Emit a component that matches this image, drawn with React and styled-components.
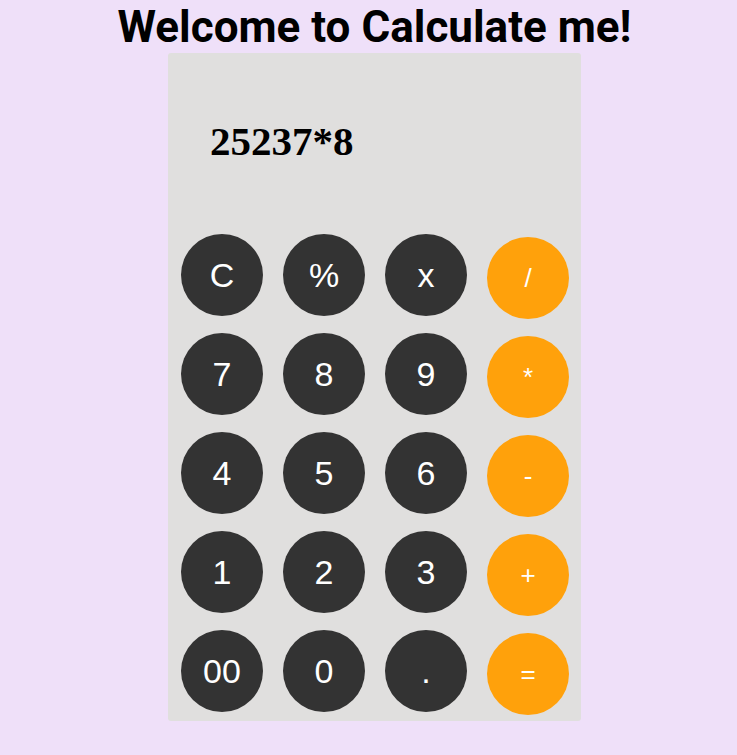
import React from "react";
import styled, { createGlobalStyle } from "styled-components";

const GlobalStyle = createGlobalStyle`
  body {
    margin: 0;
    background-color: #efe0f9;
    font-family: "Liberation Sans", Arial, sans-serif;
  }
`;

const Page = styled.div`
  display: flex;
  flex-direction: column;
  align-items: center;
  padding-left: 12px;
  min-height: 755px;
  box-sizing: border-box;
`;

const Title = styled.h1`
  margin: 0 0 1px;
  padding-top: 3px;
  font-family: Roboto, "Liberation Sans", sans-serif;
  font-weight: 700;
  font-size: 44px;
  line-height: 49px;
  color: #000;
`;

const Calculator = styled.div`
  width: 413px;
  background-color: #e0dfde;
  border-radius: 3px;
  padding-bottom: 9px;
`;

const Display = styled.div`
  height: 181px;
  box-sizing: border-box;
  padding: 67px 0 0 42px;
  font-family: "Liberation Serif", "Times New Roman", serif;
  font-weight: 700;
  font-size: 41px;
  line-height: 42px;
  color: #000;
`;

const Keys = styled.div`
  display: grid;
  grid-template-columns: repeat(4, 82px);
  grid-auto-rows: 82px;
  column-gap: 20px;
  row-gap: 17px;
  padding-left: 13px;
`;

const Key = styled.button`
  width: 82px;
  height: 82px;
  border: none;
  border-radius: 50%;
  padding: 0;
  display: flex;
  align-items: center;
  justify-content: center;
  font-family: "Liberation Sans", Arial, sans-serif;
  color: #fff;
  background-color: ${({ $op }) => ($op ? "#ffa10b" : "#333333")};
  font-size: ${({ $op }) => ($op ? "26px" : "34px")};
  margin-top: ${({ $op }) => ($op ? "3px" : "0")};
  cursor: pointer;
`;

const rows = [
  ["C", "%", "x", "/"],
  ["7", "8", "9", "*"],
  ["4", "5", "6", "-"],
  ["1", "2", "3", "+"],
  ["00", "0", ".", "="],
];

export default function App() {
  return (
    <>
      <GlobalStyle />
      <Page>
        <Title>Welcome to Calculate me!</Title>
        <Calculator>
          <Display>25237*8</Display>
          <Keys>
            {rows.flat().map((k, i) => (
              <Key key={i} $op={i % 4 === 3}>
                {k}
              </Key>
            ))}
          </Keys>
        </Calculator>
      </Page>
    </>
  );
}
